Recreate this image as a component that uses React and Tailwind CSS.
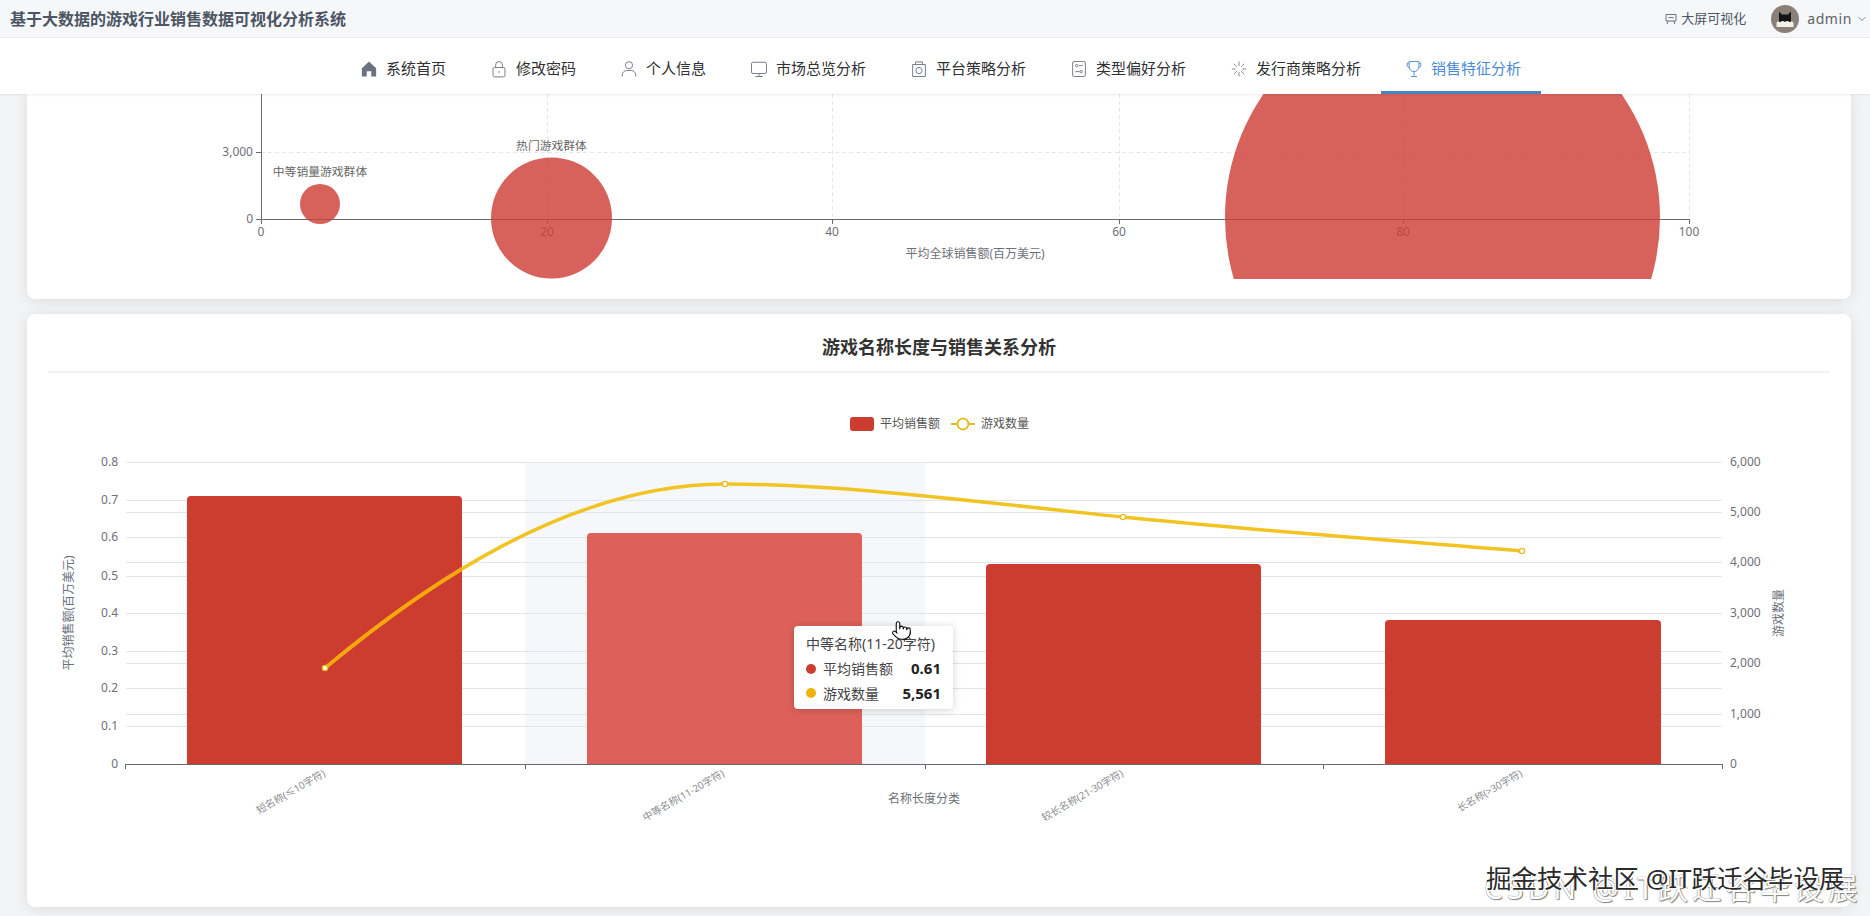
import React from "react";
import { ChevronDown, Pointer } from "lucide-react";

const Icon = ({ children, className = "" }) => (
  <svg viewBox="0 0 24 24" fill="none" stroke="currentColor" strokeWidth="1.2" className={"w-[18px] h-[18px] " + className}>
    {children}
  </svg>
);

const navItems = [
  { label: "系统首页", icon: <Icon className="text-[#6b7280]"><path d="M12 2 2.5 11v11h6.5v-7h6v7h6.5V11z" fill="currentColor" stroke="none" /></Icon> },
  { label: "修改密码", icon: <Icon className="text-[#6b7280]"><rect x="4" y="10" width="16" height="12.5" rx="2" /><path d="M7.5 10V6.5a4.5 4.5 0 0 1 9 0V10M12 14.5v3" /></Icon> },
  { label: "个人信息", icon: <Icon className="text-[#6b7280]"><circle cx="12" cy="7" r="4.8" /><path d="M3 22v-2a6 6 0 0 1 6-6h6a6 6 0 0 1 6 6v2" /></Icon> },
  { label: "市场总览分析", icon: <Icon className="text-[#6b7280]"><rect x="2" y="3" width="20" height="15" rx="2" /><path d="M12 18v4M7 22h10" /></Icon> },
  { label: "平台策略分析", icon: <Icon className="text-[#6b7280]"><path d="M3.5 6h17v16h-17zM7.5 6V2.5h9V6" /><circle cx="12" cy="14" r="4.2" /></Icon> },
  { label: "类型偏好分析", icon: <Icon className="text-[#6b7280]"><rect x="3.5" y="2" width="17" height="20" rx="2" /><circle cx="9" cy="7.5" r="1.6" /><circle cx="15" cy="15.5" r="1.6" /><path d="M12 7.5h5M7 15.5h6" /></Icon> },
  { label: "发行商策略分析", icon: <Icon className="text-[#6b7280]"><path d="M12 2v6M12 16v6M2.5 12h5M16.5 12h5M5 5l4 4M15 15l4 4M5 19l4-4M15 9l4-4" strokeWidth="1.1" /></Icon> },
  { label: "销售特征分析", active: true, icon: <Icon className="text-[#4a8ad4]"><path d="M5.5 2h13v7a6.5 6.5 0 0 1-13 0zM12 15.5V22M8 22h8" /><path d="M5.5 4H3v3a3 3 0 0 0 2.8 3M18.5 4H21v3a3 3 0 0 1-2.8 3" /></Icon> },
];

const tick = "#666a72";
const grid = "#e1e4ea";

function BubbleChart() {
  const xs = [261, 547, 832, 1119, 1403, 1689];
  return (
    <svg viewBox="27 94 1824 205" className="block w-[1824px] h-[205px]">
      <defs>
        <clipPath id="bubble-clip">
          <rect x="27" y="94" width="1824" height="185" />
        </clipPath>
      </defs>
      <g shapeRendering="crispEdges">
        {xs.slice(1).map((x) => (
          <line key={x} x1={x} x2={x} y1="94" y2="219" stroke="#e2e6ee" strokeDasharray="4 3" />
        ))}
        <line x1="261" x2="1689" y1="152" y2="152" stroke="#e2e6ee" strokeDasharray="4 3" />
        <path d="M261 94V219H1689M256 152H261M256 219H261" stroke={tick} fill="none" />
        {xs.map((x) => (
          <line key={x} x1={x} x2={x} y1="219" y2="224" stroke={tick} />
        ))}
      </g>
      {xs.map((x, i) => (
        <text key={x} x={x} y="236" textAnchor="middle" fontSize="12" fill="#6e7079">{i * 20}</text>
      ))}
      <text x="253" y="156" textAnchor="end" fontSize="12" fill="#6e7079">3,000</text>
      <text x="253" y="223" textAnchor="end" fontSize="12" fill="#6e7079">0</text>
      <text x="975" y="258" textAnchor="middle" fontSize="12" fill="#6e7079">平均全球销售额(百万美元)</text>
      <g clipPath="url(#bubble-clip)" fill="#cd4037" fillOpacity="0.82">
        <circle cx="320" cy="204" r="20" />
        <circle cx="551.5" cy="218" r="60.5" />
        <circle cx="1442.5" cy="217.5" r="217.5" />
      </g>
      <text x="320" y="176" textAnchor="middle" fontSize="11.8" fill="#666">中等销量游戏群体</text>
      <text x="551.5" y="150" textAnchor="middle" fontSize="11.8" fill="#666">热门游戏群体</text>
    </svg>
  );
}

const leftTicks = [
  ["0.8", 462], ["0.7", 500], ["0.6", 537], ["0.5", 576], ["0.4", 613],
  ["0.3", 651], ["0.2", 688], ["0.1", 726], ["0", 764],
];
const rightTicks = [
  ["6,000", 462], ["5,000", 512], ["4,000", 562], ["3,000", 613],
  ["2,000", 663], ["1,000", 714], ["0", 764],
];
const bars = [
  { x: 187, w: 275, top: 496, fill: "#cc3c2f" },
  { x: 587, w: 275, top: 533, fill: "#dd615a" },
  { x: 986, w: 275, top: 564, fill: "#cc3c2f" },
  { x: 1385, w: 276, top: 620, fill: "#cc3c2f" },
];
const xLabels = [
  ["短名称(≤10字符)", 324],
  ["中等名称(11-20字符)", 723],
  ["较长名称(21-30字符)", 1122],
  ["长名称(>30字符)", 1521],
];
const linePath = "M325 668C425 585 570 484 725 484C850 484 1000 505 1123 517C1250 530 1400 541 1522 551";
const points = [[325, 668], [725, 484], [1123, 517], [1522, 551]];

function ComboChart() {
  return (
    <svg viewBox="27 373 1824 534" className="block w-[1824px] h-[534px]">
      <defs>
        <clipPath id="first-bar">
          <rect x="187" y="496" width="275" height="268" />
        </clipPath>
      </defs>
      <rect x="525" y="462" width="400" height="302" fill="#f5f7fb" />
      <g shapeRendering="crispEdges">
        {[...leftTicks, ...rightTicks].map(([label, y], i) =>
          y < 764 ? <line key={i} x1="126" x2="1722" y1={y} y2={y} stroke={grid} strokeWidth="1" /> : null
        )}
      </g>
      {bars.map((b) => (
        <path
          key={b.x}
          d={`M${b.x} 764V${b.top + 4}a4 4 0 0 1 4-4H${b.x + b.w - 4}a4 4 0 0 1 4 4V764z`}
          fill={b.fill}
        />
      ))}
      <path d="M125 769V764H1722V769M525 764V769M925 764V769M1323 764V769" stroke={tick} fill="none" shapeRendering="crispEdges" />
      <path d={linePath} stroke="#f1c423" strokeWidth="3.5" fill="none" />
      <path d={linePath} stroke="#f8a60c" strokeWidth="3.5" fill="none" clipPath="url(#first-bar)" />
      {points.map(([x, y]) => (
        <circle key={x} cx={x} cy={y} r="2.6" fill="#fff" stroke="#e9bd26" strokeWidth="1.4" />
      ))}
      {leftTicks.map(([label, y]) => (
        <text key={label} x="118" y={y + 4} textAnchor="end" fontSize="12" fill="#6e7079">{label}</text>
      ))}
      {rightTicks.map(([label, y]) => (
        <text key={label} x="1730" y={y + 4} fontSize="12" fill="#6e7079">{label}</text>
      ))}
      <rect x="850" y="417" width="24" height="14" rx="3" fill="#cc3c2f" />
      <text x="880" y="428" fontSize="12" fill="#555">平均销售额</text>
      <path d="M951 424H975" stroke="#e6bd29" strokeWidth="2" />
      <circle cx="963" cy="424" r="5.5" fill="#fff" stroke="#e6bd29" strokeWidth="2" />
      <text x="981" y="428" fontSize="12" fill="#555">游戏数量</text>
      {xLabels.map(([label, x]) => (
        <text key={label} x={x} y="776" textAnchor="end" fontSize="10" fill="#8a8c92" transform={`rotate(-30 ${x} 772)`}>{label}</text>
      ))}
      <text x="924" y="803" textAnchor="middle" fontSize="12" fill="#6e7079">名称长度分类</text>
      <text x="73" y="613" textAnchor="middle" fontSize="12" fill="#6e7079" transform="rotate(-90 73 613)">平均销售额(百万美元)</text>
      <text x="1783" y="613" textAnchor="middle" fontSize="12" fill="#6e7079" transform="rotate(-90 1783 613)">游戏数量</text>
    </svg>
  );
}

function Avatar() {
  return (
    <svg viewBox="0 0 28 28" className="w-[28px] h-[28px]">
      <circle cx="14" cy="14" r="14" fill="#8b8078" />
      <path d="M8 19V6.5L11 9.5H17L20 6.5V19z" fill="#141414" />
      <path d="M5.5 18c1-2 3-1.5 4-.8 1-1.5 3-1.5 4.5-.2 1.5-1.3 3.5-1.3 4.5.2 1-.7 3-1.2 4 .8v4H5.5z" fill="#f4f1e8" />
    </svg>
  );
}

export default function App() {
  return (
    <div className="relative h-[916px] w-[1870px] overflow-hidden bg-[#f3f4f6] text-[#303133] [font-family:'Noto_Sans','Noto_Sans_CJK_SC',sans-serif]">
      <header className="flex h-[38px] items-center justify-between border-b border-[#e8eaed] bg-[#f6f7f9] pl-[10px] pr-[2px]">
        <h1 className="text-[16px] font-bold text-[#4b5563]">基于大数据的游戏行业销售数据可视化分析系统</h1>
        <div className="flex items-center">
          <svg viewBox="0 0 12 12" fill="none" stroke="#6b7280" className="h-[12px] w-[12px]">
            <path d="M1 1.5h10v6.5H1zM3 8l-.8 3M9 8l.8 3M3.5 4.5h5" />
          </svg>
          <span className="ml-[4px] text-[13px] text-[#4b5563]">大屏可视化</span>
          <div className="ml-[25px]"><Avatar /></div>
          <span className="ml-[8px] text-[14px] tracking-[0.6px] text-[#606266]">admin</span>
          <ChevronDown className="ml-[4px] h-[12px] w-[12px] text-[#606266]" strokeWidth={1.5} />
        </div>
      </header>

      <nav className="relative z-10 flex h-[56px] justify-center bg-white pl-[7px] shadow-[0_1px_2px_rgba(0,0,0,0.08)]">
        {navItems.map((item) => (
          <div
            key={item.label}
            className={
              "flex h-[56px] items-center gap-[8px] border-b-[3px] pl-[24px] pr-[20px] pt-[8px] text-[15px] " +
              (item.active ? "border-[#4a84c4] text-[#4a8ad4]" : "border-transparent text-[#303133]")
            }
          >
            {item.icon}
            <span>{item.label}</span>
          </div>
        ))}
      </nav>

      <main className="flex flex-col gap-[15px] px-[27px]">
        <section className="h-[205px] w-[1824px] overflow-hidden rounded-b-[8px] bg-white shadow-[0_2px_14px_rgba(0,0,0,0.1)]">
          <BubbleChart />
        </section>

        <section className="relative h-[593px] w-[1824px] rounded-[8px] bg-white shadow-[0_2px_14px_rgba(0,0,0,0.1)]">
          <div className="mx-[21px] flex h-[59px] items-center justify-center border-b-2 border-[#eff1f4] pt-[10px]">
            <h2 className="text-[18px] font-bold text-[#333]">游戏名称长度与销售关系分析</h2>
          </div>
          <ComboChart />

          <div className="absolute left-[767px] top-[312px] h-[83px] w-[159px] rounded-[4px] bg-white px-[12px] py-[8px] text-[14px] text-[#444] shadow-[0_1px_8px_rgba(0,0,0,0.18)]">
            <div className="leading-[20px] whitespace-nowrap">中等名称(11-20字符)</div>
            <div className="mt-[2px] flex h-[25px] items-center">
              <span className="h-[10px] w-[10px] rounded-full bg-[#cc3c2f]" />
              <span className="ml-[7px]">平均销售额</span>
              <span className="ml-auto text-[15px] font-bold text-[#222]">0.61</span>
            </div>
            <div className="flex h-[24px] items-center">
              <span className="h-[10px] w-[10px] rounded-full bg-[#efb20f]" />
              <span className="ml-[7px]">游戏数量</span>
              <span className="ml-auto text-[15px] font-bold text-[#222]">5,561</span>
            </div>
          </div>
          <Pointer className="absolute left-[864px] top-[306px] h-[21px] w-[21px] text-black" fill="#fff" strokeWidth={1.2} />
        </section>
      </main>

      <div className="absolute left-[1484px] top-[868px] whitespace-nowrap text-[30px] tracking-[4px] leading-[40px] text-white [text-shadow:0_0_1px_#555,1px_1px_1px_#888]">
        CSDN @IT跃迁谷毕设展
      </div>
      <div className="absolute left-[1486px] top-[861px] whitespace-nowrap text-[25.5px] leading-[34px] text-[#2a2a2a] [text-shadow:1px_1px_0_#fff,-1px_-1px_0_#fff]">
        掘金技术社区 @IT跃迁谷毕设展
      </div>
    </div>
  );
}
